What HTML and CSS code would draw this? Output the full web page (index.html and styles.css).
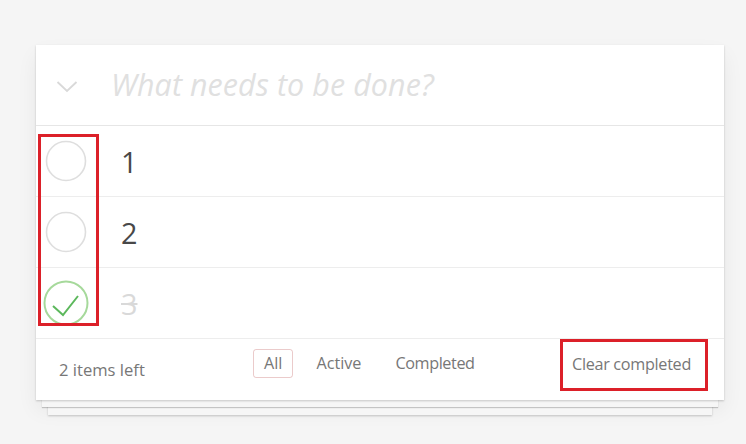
FILE: index.html
```html
<!DOCTYPE html>
<html lang="en">
<head>
<meta charset="utf-8">
<title>todos</title>
<link rel="stylesheet" href="styles.css">
</head>
<body>
<main class="page">
  <section class="todoapp">
    <header class="header">
      <span class="toggle-all">
        <svg width="22" height="14" viewBox="0 0 22 14"><polyline points="1.5,2 11,11 20.5,2" fill="none" stroke="#d9d9d9" stroke-width="1.8"/></svg>
      </span>
      <span class="new-todo">What needs to be done?</span>
    </header>
    <ul class="todo-list">
      <li class="todo">
        <span class="check"><svg width="46" height="46" viewBox="0 0 46 46"><circle cx="23" cy="23" r="19.5" fill="none" stroke="#dedede" stroke-width="1.6"/></svg></span>
        <span class="label">1</span>
      </li>
      <li class="todo">
        <span class="check"><svg width="46" height="46" viewBox="0 0 46 46"><circle cx="23" cy="23" r="19.5" fill="none" stroke="#dedede" stroke-width="1.6"/></svg></span>
        <span class="label">2</span>
      </li>
      <li class="todo completed">
        <span class="check"><svg width="46" height="46" viewBox="0 0 46 46"><circle cx="23" cy="23" r="21.5" fill="none" stroke="#a6d99b" stroke-width="2"/><polyline points="10,26 20,35 35,16" fill="none" stroke="#5cb85c" stroke-width="2"/></svg></span>
        <span class="label">3</span>
      </li>
    </ul>
    <footer class="footer">
      <span class="count">2 items left</span>
      <ul class="filters">
        <li><a class="filter selected">All</a></li>
        <li><a class="filter">Active</a></li>
        <li><a class="filter tight">Completed</a></li>
      </ul>
      <button class="clear">Clear completed</button>
    </footer>
    <div class="mark mark-checks"></div>
    <div class="mark mark-clear"></div>
  </section>
</main>
</body>
</html>
```

FILE: styles.css
```css
* { box-sizing: border-box; }
html, body { margin: 0; padding: 0; }
body {
  background: #f5f5f5;
  font-family: "Open Sans", "Liberation Sans", sans-serif;
  color: #4d4d4d;
  width: 746px;
  height: 444px;
  overflow: hidden;
}
.page {
  padding: 45px 22px 0 36px;
}
.todoapp {
  position: relative;
  background: #fff;
  width: 688px;
  box-shadow:
    0 1px 2px rgba(0,0,0,0.2),
    0 13px 0 -6px #f6f6f6,
    0 14px 1px -6px rgba(0,0,0,0.2),
    0 27px 0 -12px #f6f6f6,
    0 28px 2px -12px rgba(0,0,0,0.2),
    0 10px 20px rgba(0,0,0,0.06);
}
.header {
  height: 81px;
  border-bottom: 1px solid #e6e6e6;
  display: flex;
  align-items: center;
}
.toggle-all {
  width: 75px;
  display: flex;
  justify-content: flex-start;
  padding-left: 20px;
  padding-top: 3px;
}
.toggle-all svg { display: block; }
.new-todo {
  font-size: 30.4px;
  font-style: italic;
  font-weight: 400;
  color: #e0e0e0;
  line-height: 1;
  letter-spacing: 0.1px;
}
.todo-list {
  list-style: none;
  margin: 0;
  padding: 0;
}
.todo {
  height: 71px;
  border-bottom: 1px solid #ededed;
  display: flex;
  align-items: center;
}
.check {
  width: 85px;
  padding-left: 7px;
  display: flex;
  align-items: center;
}
.check svg { display: block; }
.label {
  font-size: 28.8px;
  line-height: 1;
  color: #484848;
  padding-top: 2px;
}
.completed .label {
  color: #d9d9d9;
  text-decoration: line-through;
}
.footer {
  height: 61px;
  display: flex;
  align-items: flex-start;
  color: #777;
  font-size: 16.2px;
}
.count {
  width: 217px;
  padding-left: 23px;
  padding-top: 20px;
  line-height: 22px;
  font-size: 16.6px;
}
.filters {
  list-style: none;
  margin: 0;
  padding: 10px 0 0;
  display: flex;
  gap: 12px;
}
.filter {
  display: block;
  padding: 2px 10px 3px;
  line-height: 22px;
  border: 1px solid transparent;
  border-radius: 3px;
  color: #777;
}
.filter.selected {
  border-color: rgba(175,47,47,0.25);
}
.filter.tight { letter-spacing: -0.4px; }
.clear {
  margin-left: auto;
  margin-right: 33px;
  margin-top: 14px;
  padding: 0;
  border: 0;
  background: none;
  font: inherit;
  line-height: 22px;
  letter-spacing: -0.3px;
  color: #777;
}
.mark {
  position: absolute;
  border: 3px solid #dc2029;
}
.mark-checks {
  left: 2px;
  top: 89px;
  width: 61px;
  height: 192px;
}
.mark-clear {
  left: 524px;
  top: 294px;
  width: 148px;
  height: 52px;
}
```
